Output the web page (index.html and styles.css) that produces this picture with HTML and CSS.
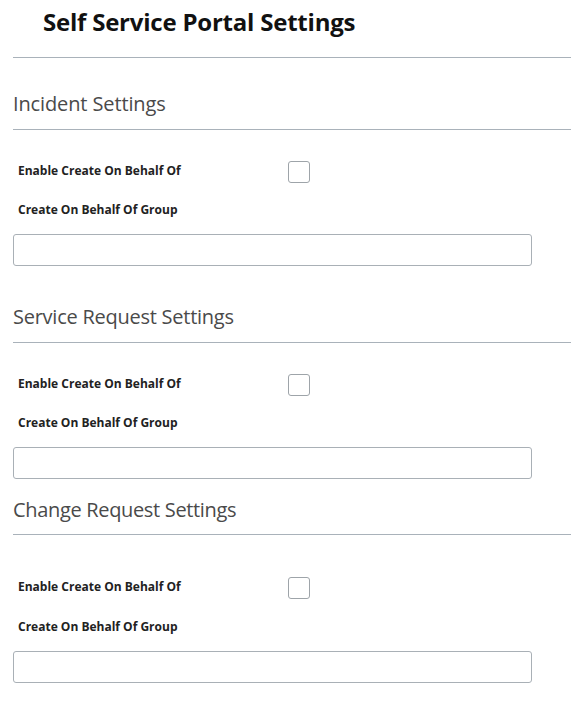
FILE: index.html
```html
<!DOCTYPE html>
<html>
<head>
<meta charset="utf-8">
<link rel="stylesheet" href="styles.css">
</head>
<body>
<div class="page">
  <h1 class="page-title">Self Service Portal Settings</h1>

  <section class="group">
    <h2 class="section-title">Incident Settings</h2>
    <div class="row check-row">
      <label class="field-label">Enable Create On Behalf Of</label>
      <span class="checkbox"></span>
    </div>
    <div class="row text-row">
      <label class="field-label">Create On Behalf Of Group</label>
    </div>
    <div class="text-input"></div>
  </section>

  <section class="group">
    <h2 class="section-title">Service Request Settings</h2>
    <div class="row check-row">
      <label class="field-label">Enable Create On Behalf Of</label>
      <span class="checkbox"></span>
    </div>
    <div class="row text-row">
      <label class="field-label">Create On Behalf Of Group</label>
    </div>
    <div class="text-input"></div>
  </section>

  <section class="group group-last">
    <h2 class="section-title">Change Request Settings</h2>
    <div class="row check-row">
      <label class="field-label">Enable Create On Behalf Of</label>
      <span class="checkbox"></span>
    </div>
    <div class="row text-row">
      <label class="field-label">Create On Behalf Of Group</label>
    </div>
    <div class="text-input"></div>
  </section>
</div>
</body>
</html>
```

FILE: styles.css
```css
html, body {
  margin: 0;
  padding: 0;
  background: #ffffff;
}

body {
  font-family: "Open Sans", "Noto Sans", sans-serif;
  color: #222;
}

.page {
  display: flex;
  flex-direction: column;
  padding-left: 13px;
}

.page-title {
  margin: 0;
  padding: 6px 0 19px 30px;
  font-size: 24px;
  line-height: 32px;
  font-weight: 700;
  letter-spacing: -0.22px;
  color: #111;
  border-bottom: 1px solid #a9b2ba;
}

.group {
  display: flex;
  flex-direction: column;
}

.section-title {
  margin: 37px 0 0 0;
  padding-bottom: 11px;
  font-size: 20px;
  line-height: 28px;
  font-weight: 400;
  letter-spacing: -0.25px;
  color: #4a4a4a;
  border-bottom: 1px solid #a9b2ba;
}

.group:first-of-type .section-title {
  margin-top: 32px;
  padding-bottom: 11px;
  letter-spacing: -0.12px;
}

.group-last .section-title {
  margin-top: 17px;
  padding-bottom: 10px;
  letter-spacing: -0.33px;
}

.row {
  display: flex;
  align-items: center;
  padding-left: 5px;
  height: 22px;
}

.check-row {
  margin-top: 31px;
}

.group-last .check-row {
  margin-top: 42px;
}

.text-row {
  margin-top: 16px;
}

.group-last .text-row {
  margin-top: 17px;
}

.field-label {
  width: 270px;
  font-size: 12px;
  line-height: 22px;
  font-weight: 700;
  color: #222;
  position: relative;
  top: -1px;
}

.text-row .field-label {
  top: 0;
}

.checkbox {
  width: 20px;
  height: 20px;
  border: 1px solid #9ea4a9;
  border-radius: 3px;
  background: #fff;
}

.text-input {
  margin-top: 13px;
  width: 517px;
  height: 30px;
  border: 1px solid #a9b0b6;
  border-radius: 3px;
  background: #fff;
}
```
